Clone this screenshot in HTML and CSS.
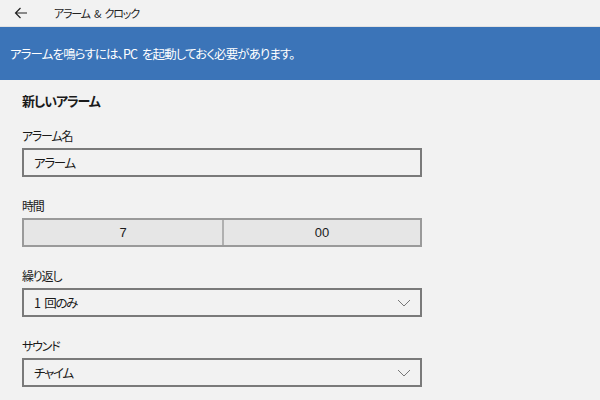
FILE: index.html
```html
<!DOCTYPE html>
<html lang="ja">
<head>
<meta charset="utf-8">
<link rel="stylesheet" href="styles.css">
</head>
<body>
<div class="titlebar">
  <svg class="back" width="14" height="12" viewBox="0 0 14 12"><path d="M13 6H1.5M6.5 1L1.5 6l5 5" fill="none" stroke="#222" stroke-width="1.2"/></svg>
  <span class="title">アラーム &amp; クロック</span>
</div>
<div class="banner">アラームを鳴らすには、PC を起動しておく必要があります。</div>
<main class="form">
  <h1 class="heading">新しいアラーム</h1>
  <div class="field">
    <div class="label">アラーム名</div>
    <div class="textbox">アラーム</div>
  </div>
  <div class="field">
    <div class="label">時間</div>
    <div class="timebox"><div class="cell">7</div><div class="cell">00</div></div>
  </div>
  <div class="field">
    <div class="label">繰り返し</div>
    <div class="textbox select"><span>1 回のみ</span><svg width="14" height="8" viewBox="0 0 14 8"><path d="M1 1l6 6 6-6" fill="none" stroke="#777" stroke-width="1"/></svg></div>
  </div>
  <div class="field">
    <div class="label">サウンド</div>
    <div class="textbox select"><span>チャイム</span><svg width="14" height="8" viewBox="0 0 14 8"><path d="M1 1l6 6 6-6" fill="none" stroke="#777" stroke-width="1"/></svg></div>
  </div>
</main>
</body>
</html>
```
FILE: styles.css
```css
html, body { margin: 0; padding: 0; }
body {
  width: 600px; height: 400px; overflow: hidden;
  background: #f2f2f2;
  font-family: "Noto Sans CJK JP", "Noto Sans", sans-serif;
  font-feature-settings: "palt";
  color: #1a1a1a;
}
.titlebar {
  display: flex; align-items: center;
  border-bottom: 1px solid #e2e2e2;
  box-sizing: border-box;
  height: 27px;
}
.back { margin-left: 14px; }
.title { margin-left: 26px; font-size: 11px; color: #222; white-space: pre; letter-spacing: -1.2px; word-spacing: 3px; }
.banner {
  background: #3b74b8;
  color: #fff;
  height: 53px;
  display: flex; align-items: center;
  padding-left: 10px;
  font-size: 12.5px;
  letter-spacing: -0.9px;
  word-spacing: 3px;
  white-space: pre;
}
.form { padding: 12px 0 0 22px; width: 400px; }
.heading { margin: 0 0 18px 0; font-size: 13px; font-weight: bold; line-height: 18px; letter-spacing: -1.1px; }
.field { margin-bottom: 21px; }
.label { font-size: 12px; line-height: 16px; margin-bottom: 4px; letter-spacing: -1.2px; }
.textbox {
  height: 29px; box-sizing: border-box;
  border: 2px solid #7a7a7a;
  display: flex; align-items: center;
  padding: 0 10px;
  font-size: 12.5px;
  letter-spacing: -1.3px;
  word-spacing: 3px;
  white-space: pre;
}
.select { justify-content: space-between; padding-right: 9px; }
.timebox {
  height: 29px; box-sizing: border-box;
  border: 2px solid #9a9a9a;
  background: #e6e6e6;
  display: grid; grid-template-columns: 1fr 1fr;
  font-family: "Liberation Sans", sans-serif; font-size: 13px;
}
.cell { display: flex; align-items: center; justify-content: center; }
.cell + .cell { border-left: 2px solid #b0b0b0; }
```
